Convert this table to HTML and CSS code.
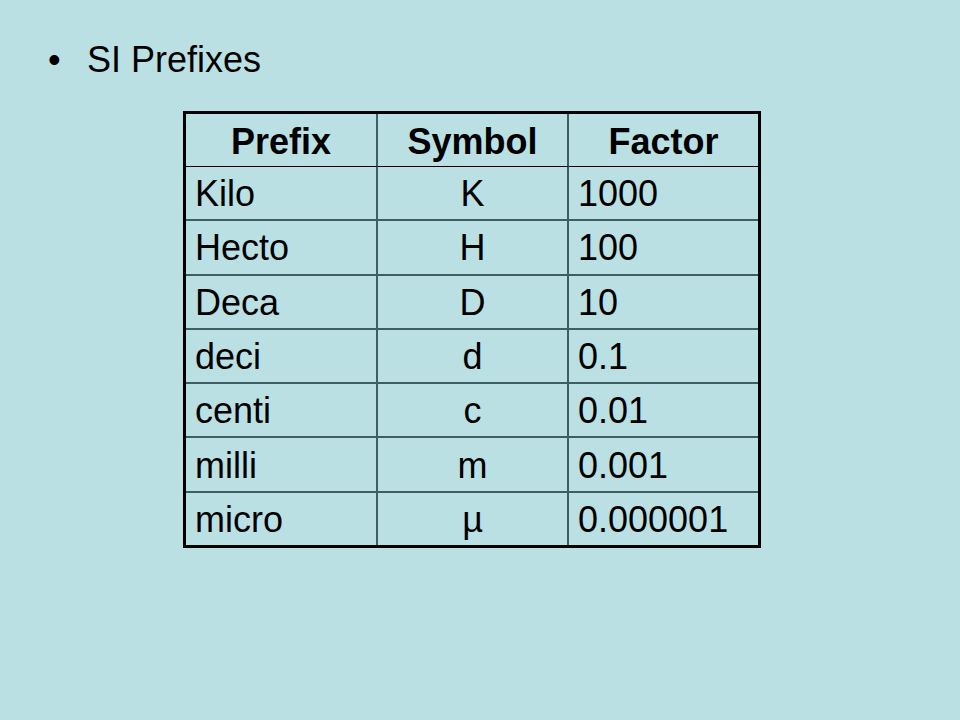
FILE: index.html
```html
<!DOCTYPE html>
<html lang="en">
<head>
<meta charset="utf-8">
<title>SI Prefixes</title>
<link rel="stylesheet" href="styles.css">
</head>
<body>
<div class="slide">
  <div class="title"><span class="bullet">•</span><span>SI Prefixes</span></div>
  <table class="prefixes">
    <colgroup>
      <col class="w1"><col class="w2"><col class="w3">
    </colgroup>
    <thead>
      <tr><th class="c1">Prefix</th><th class="c2">Symbol</th><th class="c3">Factor</th></tr>
    </thead>
    <tbody>
      <tr><td class="c1">Kilo</td><td class="c2">K</td><td class="c3">1000</td></tr>
      <tr><td class="c1">Hecto</td><td class="c2">H</td><td class="c3">100</td></tr>
      <tr><td class="c1">Deca</td><td class="c2">D</td><td class="c3">10</td></tr>
      <tr><td class="c1">deci</td><td class="c2">d</td><td class="c3">0.1</td></tr>
      <tr><td class="c1">centi</td><td class="c2">c</td><td class="c3">0.01</td></tr>
      <tr><td class="c1">milli</td><td class="c2">m</td><td class="c3">0.001</td></tr>
      <tr><td class="c1">micro</td><td class="c2">µ</td><td class="c3">0.000001</td></tr>
    </tbody>
  </table>
</div>
</body>
</html>
```

FILE: styles.css
```css
html, body {
  margin: 0;
  padding: 0;
  background: #bbe0e4;
}
.slide {
  width: 960px;
  height: 720px;
  background: #bbe0e4;
  font-family: "Liberation Sans", Arial, sans-serif;
  color: #000;
  padding-top: 39px;
  box-sizing: border-box;
}
.title {
  display: flex;
  padding-left: 48px;
  font-size: 36px;
  line-height: 41px;
  height: 41px;
}
.bullet {
  width: 39px;
}
.prefixes {
  box-sizing: border-box;
  width: 578px;
  margin-top: 31px;
  margin-left: 183px;
  border-collapse: separate;
  border-spacing: 0;
  border: 3px solid #000;
  font-size: 36px;
  table-layout: fixed;
}
.prefixes .w1 { width: 192px; }
.prefixes .w2 { width: 191px; }
.prefixes .w3 { width: 189px; }
.prefixes th,
.prefixes td {
  box-sizing: border-box;
  padding: 0;
  vertical-align: middle;
  line-height: 41px;
}
.prefixes th {
  height: 53px;
  font-weight: bold;
  text-align: center;
  border-bottom: 1px solid #000;
  padding-top: 2px;
}
.prefixes td {
  height: 54.3px;
  border-bottom: 2px solid #3d5f64;
  padding-top: 1px;
}
.prefixes tbody tr:last-child td {
  height: 52.3px;
  border-bottom: none;
}
.prefixes .c1,
.prefixes .c2 {
  border-right: 2px solid #3d5f64;
}
.prefixes td.c1,
.prefixes td.c3 {
  text-align: left;
  padding-left: 9px;
}
.prefixes td.c2 {
  text-align: center;
}
```
